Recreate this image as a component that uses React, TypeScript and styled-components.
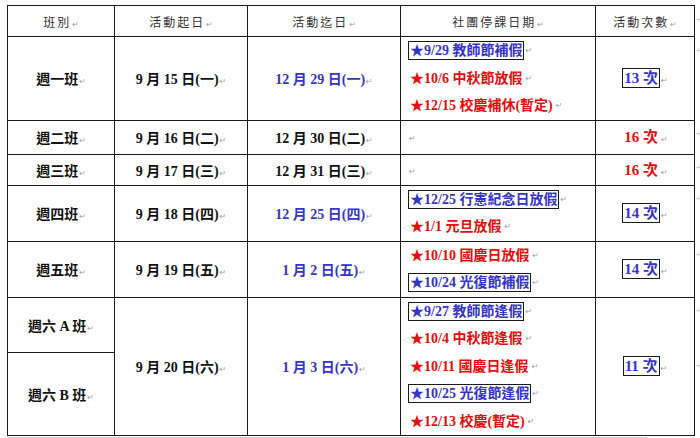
import React from "react";
import styled, { createGlobalStyle } from "styled-components";

const GlobalStyle = createGlobalStyle`
  html, body {
    margin: 0;
    padding: 0;
    background: #ffffff;
  }
  body {
    font-family: "Liberation Serif", "Noto Sans CJK TC", serif;
  }
`;

type Tone = "blue" | "red" | "black";

interface Stop {
  text: string;
  tone: "blue" | "red";
}

interface Row {
  names: string[];
  start: string;
  end: string;
  endTone: Tone;
  stops: Stop[];
  count: string;
  boxed: boolean;
  heights: number[];
}

const rows: Row[] = [
  {
    names: ["週一班"],
    start: "9 月 15 日(一)",
    end: "12 月 29 日(一)",
    endTone: "blue",
    stops: [
      { text: "★9/29 教師節補假", tone: "blue" },
      { text: "★10/6 中秋節放假", tone: "red" },
      { text: "★12/15 校慶補休(暫定)", tone: "red" },
    ],
    count: "13 次",
    boxed: true,
    heights: [83],
  },
  {
    names: ["週二班"],
    start: "9 月 16 日(二)",
    end: "12 月 30 日(二)",
    endTone: "black",
    stops: [],
    count: "16 次",
    boxed: false,
    heights: [34],
  },
  {
    names: ["週三班"],
    start: "9 月 17 日(三)",
    end: "12 月 31 日(三)",
    endTone: "black",
    stops: [],
    count: "16 次",
    boxed: false,
    heights: [31],
  },
  {
    names: ["週四班"],
    start: "9 月 18 日(四)",
    end: "12 月 25 日(四)",
    endTone: "blue",
    stops: [
      { text: "★12/25 行憲紀念日放假", tone: "blue" },
      { text: "★1/1 元旦放假", tone: "red" },
    ],
    count: "14 次",
    boxed: true,
    heights: [56],
  },
  {
    names: ["週五班"],
    start: "9 月 19 日(五)",
    end: "1 月 2 日(五)",
    endTone: "blue",
    stops: [
      { text: "★10/10 國慶日放假", tone: "red" },
      { text: "★10/24 光復節補假", tone: "blue" },
    ],
    count: "14 次",
    boxed: true,
    heights: [55],
  },
  {
    names: ["週六 A 班", "週六 B 班"],
    start: "9 月 20 日(六)",
    end: "1 月 3 日(六)",
    endTone: "blue",
    stops: [
      { text: "★9/27 教師節逢假", tone: "blue" },
      { text: "★10/4 中秋節逢假", tone: "red" },
      { text: "★10/11 國慶日逢假", tone: "red" },
      { text: "★10/25 光復節逢假", tone: "blue" },
      { text: "★12/13 校慶(暫定)", tone: "red" },
    ],
    count: "11 次",
    boxed: true,
    heights: [55, 83],
  },
];

const headers = ["班別", "活動起日", "活動迄日", "社團停課日期", "活動次數"];
const widths = [107, 133, 153, 195, 99];

const toneColor = (tone: Tone) =>
  tone === "blue" ? "#3434c8" : tone === "red" ? "#e40c0c" : "#111111";

const Page = styled.div`
  padding: 5px 0 0 7px;
  width: 693px;
`;

const Sheet = styled.table`
  border-collapse: collapse;
  table-layout: fixed;
  width: 693px;
`;

const HeadCell = styled.th`
  border: 1.5px solid #1a1a1a;
  height: 30px;
  padding: 0;
  font-family: "Noto Sans CJK TC", sans-serif;
  font-weight: 400;
  font-size: 12px;
  letter-spacing: 2px;
  color: #333333;
  text-align: center;
  vertical-align: middle;
`;

const Cell = styled.td<{ $tone?: Tone; $h?: number }>`
  border: 1.5px solid #1a1a1a;
  padding: 0;
  height: ${(p) => (p.$h ? `${p.$h - 1}px` : "auto")};
  font-family: "Liberation Serif", "Noto Sans CJK TC", serif;
  font-weight: 700;
  font-size: 14px;
  color: ${(p) => toneColor(p.$tone ?? "black")};
  text-align: center;
  vertical-align: middle;
  white-space: nowrap;
`;

const StopCell = styled(Cell)`
  text-align: left;
  padding-left: 7px;
`;

const EdgeCell = styled.td`
  border: none;
  padding: 10px 0 0 1px;
  vertical-align: top;
  overflow: hidden;
  font-family: "DejaVu Sans", sans-serif;
  font-size: 5px;
  line-height: 6px;
  color: #a8a8a8;
`;

const StopList = styled.div`
  display: flex;
  flex-direction: column;
  justify-content: center;
`;

const StopLine = styled.div<{ $tone: "blue" | "red" }>`
  height: 27.5px;
  display: flex;
  align-items: center;
  color: ${(p) => toneColor(p.$tone)};
  font-size: 14px;
`;

const Boxed = styled.span<{ $on: boolean }>`
  display: inline-block;
  line-height: 17px;
  padding: 0 1px;
  border: 1px solid ${(p) => (p.$on ? "#1a1a1a" : "transparent")};
`;

const Count = styled.span<{ $on: boolean }>`
  display: inline-block;
  line-height: 18px;
  padding: 0 1px;
  font-size: 15px;
  border: 1px solid ${(p) => (p.$on ? "#1a1a1a" : "transparent")};
`;

const Mark = styled.span`
  font-family: "DejaVu Sans", sans-serif;
  font-weight: 400;
  font-size: 8px;
  color: #a0a0a0;
  margin-left: 1px;
  letter-spacing: 0;
`;

const Shadow = styled.div`
  margin-top: 1px;
  width: 640px;
  height: 3px;
  background: #cfcfcf;
`;

const P = ({ children }: { children?: React.ReactNode }) => (
  <>
    {children}
    <Mark>↵</Mark>
  </>
);

const Edge = () => <EdgeCell>+</EdgeCell>;

export default function App() {
  return (
    <Page>
      <GlobalStyle />
      <Sheet>
        <colgroup>
          {widths.map((w, i) => (
            <col key={i} style={{ width: w }} />
          ))}
          <col style={{ width: 6 }} />
        </colgroup>
        <thead>
          <tr>
            {headers.map((h) => (
              <HeadCell key={h}>
                <P>{h}</P>
              </HeadCell>
            ))}
            <Edge />
          </tr>
        </thead>
        <tbody>
          {rows.map((r) => {
            const span = r.names.length;
            return (
              <React.Fragment key={r.names[0]}>
                <tr>
                  <Cell $h={r.heights[0]}>
                    <P>{r.names[0]}</P>
                  </Cell>
                  <Cell rowSpan={span}>
                    <P>{r.start}</P>
                  </Cell>
                  <Cell rowSpan={span} $tone={r.endTone}>
                    <P>{r.end}</P>
                  </Cell>
                  <StopCell rowSpan={span}>
                    {r.stops.length === 0 ? (
                      <P />
                    ) : (
                      <StopList>
                        {r.stops.map((s) => (
                          <StopLine key={s.text} $tone={s.tone}>
                            <Boxed $on={s.tone === "blue"}>{s.text}</Boxed>
                            <Mark>↵</Mark>
                          </StopLine>
                        ))}
                      </StopList>
                    )}
                  </StopCell>
                  <Cell rowSpan={span} $tone={r.boxed ? "blue" : "red"}>
                    <Count $on={r.boxed}>{r.count}</Count>
                    <Mark>↵</Mark>
                  </Cell>
                  <Edge />
                </tr>
                {r.names.slice(1).map((n, i) => (
                  <tr key={n}>
                    <Cell $h={r.heights[i + 1]}>
                      <P>{n}</P>
                    </Cell>
                    <Edge />
                  </tr>
                ))}
              </React.Fragment>
            );
          })}
        </tbody>
      </Sheet>
      <Shadow />
    </Page>
  );
}
